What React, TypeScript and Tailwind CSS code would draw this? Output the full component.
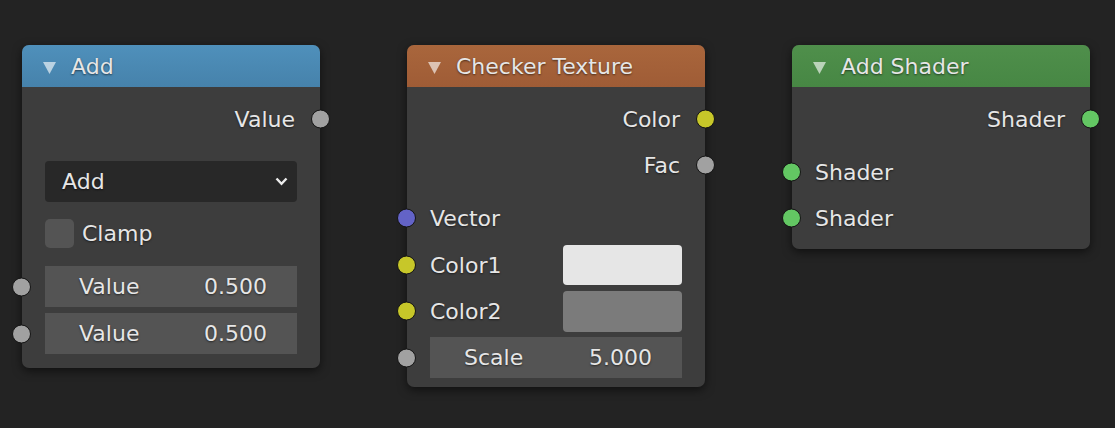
const font = "font-['DejaVu_Sans','Noto_Sans',sans-serif]";
const txt = "text-[#e6e6e6] text-[22px] [text-shadow:0_1px_2px_rgba(0,0,0,0.55)]";

function Socket({ side, color }: { side: "left" | "right"; color: string }) {
  return (
    <span
      className={`absolute top-1/2 -translate-y-1/2 w-[19px] h-[19px] rounded-full border border-[#141414] ${
        side === "left" ? "-left-[10px]" : "-right-[10px]"
      } ${color}`}
    />
  );
}

function Collapse() {
  return (
    <svg width="13" height="12" viewBox="0 0 13 12" className="ml-[21px] mt-[4px] shrink-0">
      <polygon points="0,0 13,0 6.5,12" fill="#ffffff" fillOpacity="0.62" />
    </svg>
  );
}

function Node({
  title,
  headerClass,
  children,
}: {
  title: string;
  headerClass: string;
  children: React.ReactNode;
}) {
  return (
    <div className="w-[298px] shrink-0 rounded-[7px] bg-[#3d3d3d] shadow-[0_3px_10px_rgba(0,0,0,0.55)]">
      <div className={`h-[42px] flex items-center rounded-t-[7px] ${headerClass}`}>
        <Collapse />
        <span className={`ml-[15px] ${txt}`}>{title}</span>
      </div>
      {children}
    </div>
  );
}

function OutRow({ label, color, className = "" }: { label: string; color: string; className?: string }) {
  return (
    <div className={`relative h-[40px] flex items-center justify-end pr-[25px] ${className}`}>
      <span className={txt}>{label}</span>
      <Socket side="right" color={color} />
    </div>
  );
}

function InRow({
  label,
  color,
  className = "",
  children,
}: {
  label: string;
  color: string;
  className?: string;
  children?: React.ReactNode;
}) {
  return (
    <div className={`relative h-[40px] flex items-center px-[23px] ${className}`}>
      <span className={`${txt} flex-1`}>{label}</span>
      {children}
      <Socket side="left" color={color} />
    </div>
  );
}

function ValueField({
  label,
  value,
  color,
  className = "",
}: {
  label: string;
  value: string;
  color: string;
  className?: string;
}) {
  return (
    <div className={`relative h-[41px] px-[23px] ${className}`}>
      <div className="h-full bg-[#545454] flex items-center justify-between pl-[34px] pr-[30px]">
        <span className={txt}>{label}</span>
        <span className={txt}>{value}</span>
      </div>
      <Socket side="left" color={color} />
    </div>
  );
}

export default function App() {
  return (
    <div className={`w-[1115px] h-[428px] bg-[#232323] overflow-hidden ${font}`}>
      <div className="flex items-start gap-[87px] pl-[22px] pt-[45px]">
        <Node title="Add" headerClass="bg-linear-to-b from-[#4f90bb] to-[#4682ab]">
          <div className="flex flex-col pt-[12px] pb-[14px]">
            <OutRow label="Value" color="bg-[#a1a1a1]" />
            <div className="mt-[22px] px-[23px]">
              <div className="h-[41px] rounded-[4px] bg-[#282828] flex items-center justify-between pl-[17px] pr-[9px]">
                <span className={txt}>Add</span>
                <svg width="13" height="9" viewBox="0 0 13 9">
                  <polyline points="1.5,1.5 6.5,6.8 11.5,1.5" fill="none" stroke="#ececec" strokeWidth="2.4" />
                </svg>
              </div>
            </div>
            <div className="mt-[17px] px-[23px] h-[29px] flex items-center gap-[8px]">
              <span className="w-[29px] h-[29px] rounded-[5px] bg-[#545454]" />
              <span className={txt}>Clamp</span>
            </div>
            <ValueField label="Value" value="0.500" color="bg-[#a1a1a1]" className="mt-[18px]" />
            <ValueField label="Value" value="0.500" color="bg-[#a1a1a1]" className="mt-[6px]" />
          </div>
        </Node>

        <Node title="Checker Texture" headerClass="bg-linear-to-b from-[#a9663c] to-[#9f5c36]">
          <div className="flex flex-col pt-[12px] pb-[9px]">
            <OutRow label="Color" color="bg-[#c7c729]" />
            <OutRow label="Fac" color="bg-[#a1a1a1]" className="mt-[6px]" />
            <InRow label="Vector" color="bg-[#6363c7]" className="mt-[13px]" />
            <InRow label="Color1" color="bg-[#c7c729]" className="mt-[7px]">
              <span className="w-[119px] h-[40px] rounded-[4px] bg-[#e6e6e6]" />
            </InRow>
            <InRow label="Color2" color="bg-[#c7c729]" className="mt-[6px]">
              <span className="w-[119px] h-[41px] rounded-[4px] bg-[#7b7b7b]" />
            </InRow>
            <ValueField label="Scale" value="5.000" color="bg-[#a1a1a1]" className="mt-[6px]" />
          </div>
        </Node>

        <Node title="Add Shader" headerClass="bg-linear-to-b from-[#4f8f4b] to-[#478744]">
          <div className="flex flex-col pt-[12px] pb-[11px]">
            <OutRow label="Shader" color="bg-[#63c763]" />
            <InRow label="Shader" color="bg-[#63c763]" className="mt-[13px]" />
            <InRow label="Shader" color="bg-[#63c763]" className="mt-[6px]" />
          </div>
        </Node>
      </div>
    </div>
  );
}
